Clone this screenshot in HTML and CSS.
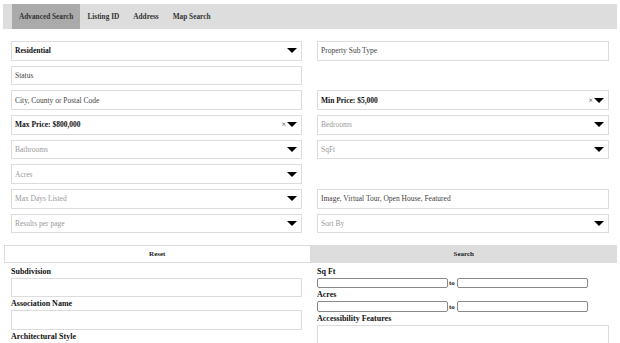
FILE: index.html
```html
<!DOCTYPE html>
<html lang="en">
<head>
    <meta charset="UTF-8">
    <title>Property Search</title>
    <link rel="stylesheet" href="styles.css">
</head>
<body>
    <div class="search-box">
        <ul class="tabs">
            <li class="active">Advanced Search</li>
            <li>Listing ID</li>
            <li>Address</li>
            <li>Map Search</li>
        </ul>

        <div class="fields">
            <div class="field value">Residential<span class="arrow"></span></div>
            <div class="field text">Property Sub Type</div>

            <div class="field text">Status</div>
            <div></div>

            <div class="field text">City, County or Postal Code</div>
            <div class="field value">Min Price: $5,000<span class="clear">×</span><span class="arrow"></span></div>

            <div class="field value">Max Price: $800,000<span class="clear">×</span><span class="arrow"></span></div>
            <div class="field placeholder">Bedrooms<span class="arrow"></span></div>

            <div class="field placeholder">Bathrooms<span class="arrow"></span></div>
            <div class="field placeholder">SqFt<span class="arrow"></span></div>

            <div class="field placeholder">Acres<span class="arrow"></span></div>
            <div></div>

            <div class="field placeholder">Max Days Listed<span class="arrow"></span></div>
            <div class="field text">Image, Virtual Tour, Open House, Featured</div>

            <div class="field placeholder">Results per page<span class="arrow"></span></div>
            <div class="field placeholder">Sort By<span class="arrow"></span></div>
        </div>

        <div class="buttons">
            <button class="btn reset">Reset</button>
            <button class="btn search">Search</button>
        </div>

        <div class="more">
            <div class="col">
                <label>Subdivision</label>
                <div class="box"></div>
                <label>Association Name</label>
                <div class="box"></div>
                <label>Architectural Style</label>
            </div>
            <div class="col">
                <label>Sq Ft</label>
                <div class="range"><input type="text"><span>to</span><input type="text"></div>
                <label>Acres</label>
                <div class="range"><input type="text"><span>to</span><input type="text"></div>
                <label>Accessibility Features</label>
                <div class="box tall"></div>
            </div>
        </div>
    </div>
</body>
</html>
```

FILE: styles.css
```css
body {
    margin: 0;
    font-family: "Liberation Serif", "Times New Roman", serif;
    font-size: 7.5px;
    color: #222;
    background: #fff;
    overflow: hidden;
}
.search-box {
    margin: 4px 3px 0 3px;
}
.tabs {
    list-style: none;
    margin: 0;
    padding: 0 0 0 9px;
    height: 25px;
    background: #dddddd;
    display: flex;
}
.tabs li {
    padding: 0 7px;
    line-height: 25px;
    font-size: 7.3px;
    font-weight: bold;
    color: #333;
}
.tabs li.active {
    background: #aaaaaa;
}
.fields {
    display: grid;
    grid-template-columns: 291px 292px;
    column-gap: 15px;
    row-gap: 5.2px;
    padding: 12px 8px 0 8px;
}
.field {
    height: 19.5px;
    box-sizing: border-box;
    border: 1px solid #dcdcdc;
    padding: 0 3px;
    display: flex;
    align-items: center;
}
.field.value {
    font-weight: bold;
    color: #111;
}
.field.text {
    color: #444;
}
.field.placeholder {
    color: #999;
}
.clear {
    margin-left: auto;
    font-size: 8px;
    color: #666;
    font-weight: bold;
    margin-right: 1px;
}
.arrow {
    margin-left: auto;
    width: 0;
    height: 0;
    border-left: 5px solid transparent;
    border-right: 5px solid transparent;
    border-top: 5px solid #000;
    margin-right: 1px;
}
.clear + .arrow {
    margin-left: 0;
}
.buttons {
    display: flex;
    margin-top: 11.5px;
    padding-left: 1px;
}
.btn {
    flex: 1;
    height: 18px;
    font-family: inherit;
    font-size: 7px;
    font-weight: bold;
    color: #222;
    border: 1px solid #dcdcdc;
    background: #fff;
    padding: 0;
}
.btn.search {
    background: #dddddd;
    border-color: #dddddd;
}
.more {
    display: grid;
    grid-template-columns: 291px 292px;
    column-gap: 15px;
    padding: 3px 8px 0 8px;
}
.col label {
    display: block;
    font-weight: bold;
    font-size: 8px;
    color: #111;
    line-height: 11px;
}
.box {
    height: 19.5px;
    box-sizing: border-box;
    border: 1px solid #dcdcdc;
    margin: 1px 0 1px 0;
}
.box.tall {
    height: 40px;
}
.range {
    display: flex;
    align-items: center;
    margin: 1px 0 1px 0;
}
.range input {
    width: 131px;
    height: 10.5px;
    box-sizing: border-box;
    border: 1px solid #8a8a8a;
    border-radius: 2px;
    padding: 0;
    margin: 0;
}
.range span {
    font-weight: bold;
    font-size: 7px;
    padding: 0 2px 0 1px;
}
```
